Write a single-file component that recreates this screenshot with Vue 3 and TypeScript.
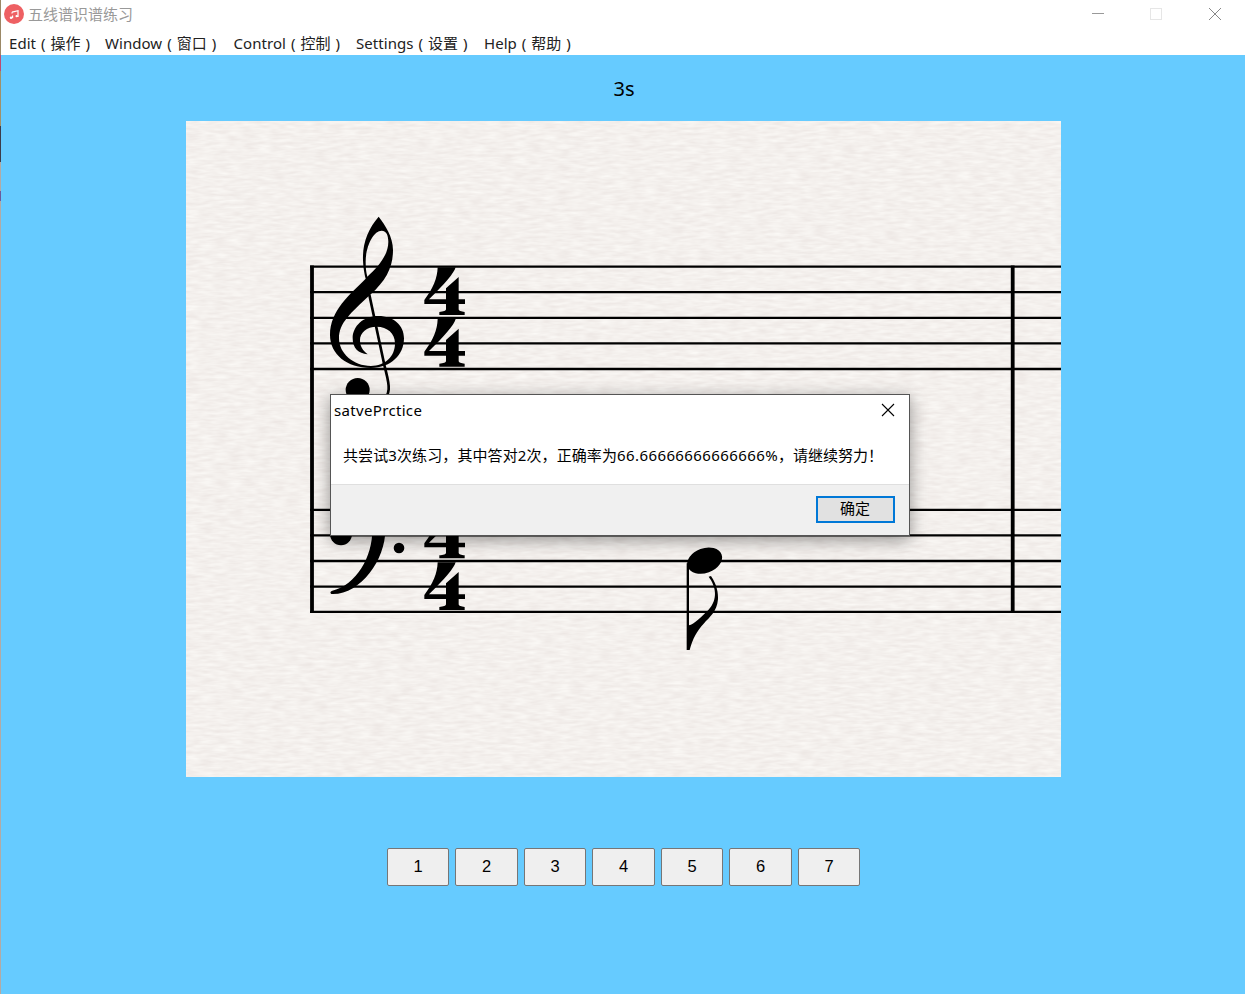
<script setup lang="ts">
interface MenuEntry { label: string; local: string; width: number }

const menus: MenuEntry[] = [
  { label: 'Edit', local: '操作', width: 96 },
  { label: 'Window', local: '窗口', width: 128.5 },
  { label: 'Control', local: '控制', width: 122.5 },
  { label: 'Settings', local: '设置', width: 128 },
  { label: 'Help', local: '帮助', width: 100 },
]
const staffLines: number[] = [266.7, 292.2, 317.8, 343.3, 369, 509.8, 535.3, 561, 586.6, 611.8]
const meterOffsets: number[] = [0, 155, 730, 885]
const answers: number[] = [1, 2, 3, 4, 5, 6, 7]
</script>

<template>
  <div class="window">
    <div class="edge"></div>
    <div class="content">
      <header class="titlebar">
        <svg class="logo" viewBox="0 0 20 20">
          <circle cx="10" cy="10" r="10" fill="#ee6063" />
          <path d="M8 8.200L14 6.700V12.300H12.500M8 8.200V9.500M8.600 11.500V13.700H7" fill="none" stroke="#fff" stroke-width="1.200" />
          <circle cx="7" cy="13.700" r="1.200" fill="#fff" />
          <circle cx="12.600" cy="12.200" r="1.100" fill="#fff" />
        </svg>
        <span class="title">五线谱识谱练习</span>
        <svg class="controls" viewBox="0 0 155 28" fill="none" shape-rendering="crispEdges">
          <path d="M2 13.5h12" stroke="#999" />
          <rect x="60.500" y="8.500" width="11" height="11" stroke="#e6e6e6" />
          <path d="M119 8l12 12M131 8l-12 12" stroke="#888" shape-rendering="auto" />
        </svg>
      </header>
      <nav class="menubar">
        <span v-for="m in menus" :key="m.label" class="menu" :style="{ width: m.width + 'px' }">{{ m.label }} ( {{ m.local }} )</span>
      </nav>
      <main class="stage">
        <div class="timer">3s</div>
        <svg class="score" viewBox="186 121 875 656">
          <defs>
            <filter id="paper" x="0" y="0" width="100%" height="100%" color-interpolation-filters="sRGB">
              <feTurbulence type="fractalNoise" baseFrequency="0.07 0.33" numOctaves="2" seed="4" />
              <feColorMatrix values="0.07 0 0 0 0.921  0.09 0 0 0 0.896  0.09 0 0 0 0.884  0 0 0 0 1" />
            </filter>
            <path
              id="four"
              d="M413 202H467C462 220 434 252 387 298H438V265L476 231V298H495V312H476V328C476 333 484 335 494 336V345H418V336C430 335 438 333 438 328V312H373V300C400 265 412 235 413 202Z"
            />
          </defs>
          <rect x="186" y="121" width="875" height="656" filter="url(#paper)" />
          <path v-for="y in staffLines" :key="y" :d="`M310 ${y}H1061`" stroke="#000" stroke-width="2.300" />
          <path d="M312 265.600V613M1012.700 265.600V613" stroke="#000" stroke-width="3.800" />
          <g transform="translate(300 200) scale(.333333)">
            <path
              fill-rule="evenodd"
              d="M236 50C205 85 187 130 189 180C190 205 193 220 197 236C150 284 90 330 90 405C90 462 140 504 213 504C272 504 312 465 312 415C312 375 280 348 235 348C190 348 158 378 158 415C158 445 175 460 203 463C188 450 180 440 180 420C180 398 200 380 230 380C262 380 285 400 285 430C285 470 255 498 213 498C160 498 117 460 117 415C117 370 150 340 210 285C260 240 279 200 279 150C279 110 255 75 236 50ZM245 92C260 92 265 108 265 125C265 165 235 200 202 230C198 215 197 200 197 185C197 140 220 92 245 92Z"
            />
            <path d="M208 284L253 495C260 525 268 550 266 568Q265 580 260 588" fill="none" stroke="#000" stroke-width="8" />
            <circle cx="173" cy="570" r="36" />
            <use v-for="dy in meterOffsets" :key="dy" href="#four" :y="dy" />
          </g>
          <g transform="translate(300 490) scale(.333333)">
            <circle cx="123" cy="133" r="33" />
            <circle cx="297" cy="174" r="16" />
            <path d="M217 120C217 200 170 285 95 303Q88 308 94 312C180 316 256 210 256 120Z" />
          </g>
          <g transform="translate(660 530) scale(.333333)">
            <ellipse cx="134" cy="92" rx="54" ry="37" transform="rotate(-20 134 92)" />
            <path d="M80 100H87V286C102 284 125 259 145 240C175 207 168 170 146 140L153 138C171 164 175 190 174 208C171 244 150 261 131 281C110 304 98 325 89 360H80Z" />
          </g>
        </svg>
        <div class="answers">
          <button v-for="n in answers" :key="n" class="answer">{{ n }}</button>
        </div>
      </main>
    </div>
    <section class="dialog" role="dialog">
      <div class="dialog-head">
        <span class="dialog-title">satvePrctice</span>
        <svg class="dialog-close" viewBox="0 0 14 14"><path d="M1 1l12 12M13 1L1 13" stroke="#000" stroke-width="1.100" /></svg>
      </div>
      <p class="message">
        <span class="count">共尝试3次练习，其中答对2次，正确率为</span><span class="rate">66.66666666666666%</span><span>，请继续努力！</span>
      </p>
      <div class="dialog-foot"><button class="ok">确定</button></div>
    </section>
  </div>
</template>

<style>
body { margin: 0; overflow: hidden; }
</style>

<style scoped>
.window {
  position: relative;
  display: flex;
  width: 1245px;
  height: 994px;
  overflow: hidden;
  font-family: "Noto Sans", "Noto Sans CJK SC", sans-serif;
}
.edge {
  width: 1px;
  background: linear-gradient(#9b8866 0 55px, #bd4a70 55px 71px, #a09068 71px 126px, #3c3c4a 126px 162px, #b2aaa4 162px 191px, #6b5b9c 191px 201px, #b2aaa4 201px);
}
.content { flex: 1; display: flex; flex-direction: column; }
.titlebar { display: flex; height: 32px; background: #fff; }
.logo { width: 20px; height: 20px; margin: 4px 0 0 3px; }
.title { margin-left: 4px; font-size: 15px; line-height: 29px; color: #999; }
.controls { width: 155px; height: 28px; margin-left: auto; }
.menubar { display: flex; height: 23px; padding-left: 8px; background: #fff; }
.menu { flex: none; font-size: 15px; line-height: 23px; letter-spacing: 0.05px; word-spacing: 1px; color: #222; white-space: nowrap; }
.stage {
  flex: 1;
  display: flex;
  flex-direction: column;
  align-items: center;
  background: #66cbff;
}
.timer { height: 66px; font-size: 20px; line-height: 67px; padding-left: 2px; }
.score { width: 875px; height: 656px; margin-left: 1px; }
.answers { display: flex; gap: 6px; margin: 71px 0 0 1px; }
.answer {
  width: 62.5px;
  height: 38px;
  padding: 0 0 2px;
  border: 1px solid #767676;
  border-radius: 2px;
  background: #efefef;
  color: #000;
  font: 16.5px "Liberation Sans", sans-serif;
}
.dialog {
  position: absolute;
  left: 330px;
  top: 394px;
  display: flex;
  flex-direction: column;
  box-sizing: border-box;
  width: 580px;
  height: 142px;
  border: 1px solid #555;
  background: #fff;
  box-shadow: 0 4px 16px rgba(0, 0, 0, 0.4);
  font-size: 15px;
  color: #000;
}
.dialog-head { display: flex; justify-content: space-between; height: 32px; padding: 0 14px 0 3px; line-height: 31px; }
.dialog-title { letter-spacing: 0.33px; }
.dialog-close { width: 14px; height: 14px; margin-top: 8px; }
.message { flex: 1; margin: 0; padding: 16px 0 0 12px; line-height: 24px; white-space: nowrap; }
.count { letter-spacing: 0.1px; }
.rate { letter-spacing: 0.4px; }
.dialog-foot {
  display: flex;
  justify-content: flex-end;
  box-sizing: border-box;
  height: 51px;
  padding: 11px 14px 0 0;
  border-top: 1px solid #dfdfdf;
  background: #f0f0f0;
}
.ok {
  width: 79px;
  height: 27px;
  padding: 0 1px 2px 0;
  border: 2px solid #0078d7;
  background: #e1e1e1;
  color: #000;
  font: inherit;
  line-height: 21px;
}
</style>
